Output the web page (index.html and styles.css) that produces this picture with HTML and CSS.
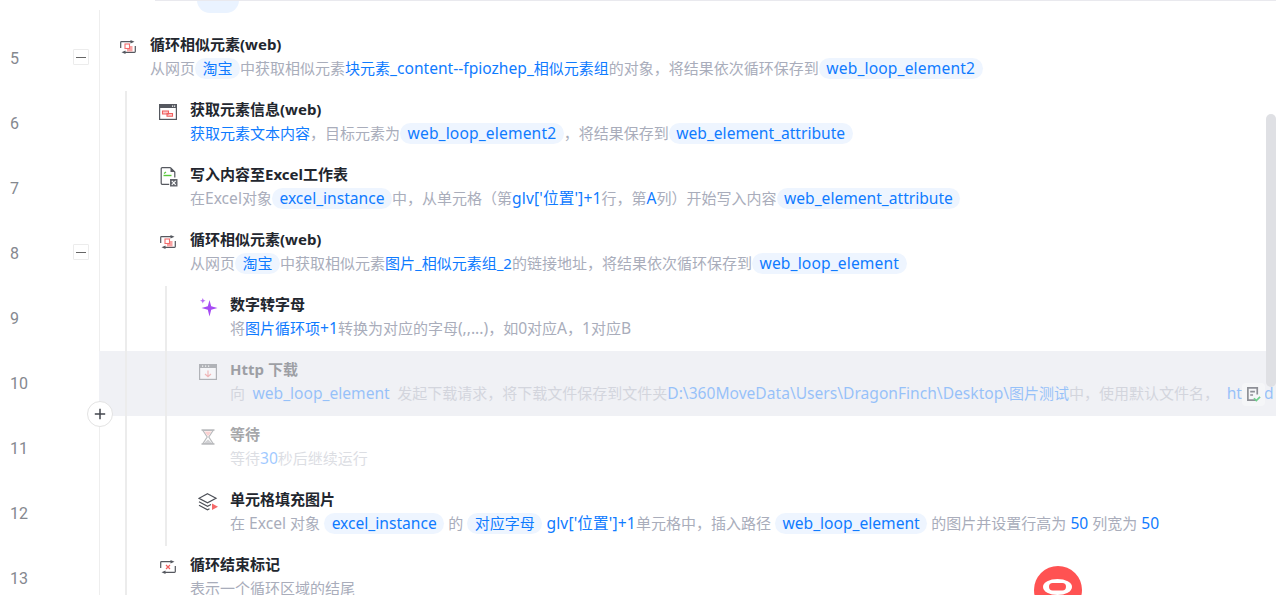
FILE: index.html
```html
<!DOCTYPE html>
<html lang="zh">
<head>
<meta charset="utf-8">
<title>流程</title>
<link rel="stylesheet" href="styles.css">
</head>
<body>
<svg class="defs" width="0" height="0">
  <symbol id="loop" viewBox="0 0 16 14">
    <path d="M.7 8V2.500c0-.5.3-.8.8-.8H12M15.300 6v5.500c0 .5-.3.8-.8.8H4" fill="none" stroke="#55585f" stroke-width="1.200"/>
    <path d="M10.500 0l4 1.700-4 1.700zM5.500 10.600l-4 1.700 4 1.700z" fill="#55585f"/>
  </symbol>
</svg>
<main class="flow">
  <div class="top-strip">
    <div class="gutter gutter-top"></div>
    <div class="top-body"><span class="top-pill"></span></div>
  </div>

  <div class="row">
    <div class="gutter"><span class="num">5</span><span class="fold"></span></div>
    <div class="body">
      <div class="content">
        <svg class="icon" viewBox="0 0 16 14"><use href="#loop"/><path d="M7 6h5.500v5.500H7z" fill="#f9a3a3"/><rect x="5" y="4" width="4.500" height="4.500" fill="#fff" stroke="#f26d6d" stroke-width="1.100"/></svg>
        <div class="text">
          <div class="title">循环相似元素(web)</div>
          <div class="desc">从网页<span class="pill">淘宝</span>中获取相似元素<b class="link">块元素<span class="en">_content--fpiozhep_</span>相似元素组</b>的对象，将结果依次循环保存到<span class="pill en wide">web_loop_element2</span></div>
        </div>
      </div>
    </div>
  </div>

  <div class="row">
    <div class="gutter"><span class="num">6</span></div>
    <div class="body">
      <span class="guide"></span>
      <div class="content">
        <svg class="icon icon-win" viewBox="0 0 18 16"><rect x=".6" y=".6" width="16.800" height="14.800" fill="#fff" stroke="#55585f" stroke-width="1.200"/><path d="M.6.6h16.800v3.400H.6z" fill="#55585f"/><path d="M13 1.500h1.200v1.200H13zM15 1.500h1.200v1.200H15z" fill="#fff"/><path d="M3.500 7h6v3h-6zM8 9.500h5.500v2.700H8z" fill="#fbc9c9" stroke="#f05f5f" stroke-width="1.100"/></svg>
        <div class="text">
          <div class="title">获取元素信息(web)</div>
          <div class="desc"><b class="link">获取元素文本内容</b>，目标元素为<span class="pill en wide">web_loop_element2</span>，将结果保存到<span class="pill en">web_element_attribute</span></div>
        </div>
      </div>
    </div>
  </div>

  <div class="row">
    <div class="gutter"><span class="num">7</span></div>
    <div class="body">
      <span class="guide"></span>
      <div class="content">
        <svg class="icon icon-doc" viewBox="0 0 18 20"><path d="M10.500.7H2.200c-.6 0-1 .4-1 1v14.600c0 .6.4 1 1 1h7M10.500.7l4.300 4.300v5.500" fill="none" stroke="#55585f" stroke-width="1.200"/><path d="M10.500.7v4.300h4.300z" fill="#55585f"/><path d="M3.500 8.500h8" stroke="#59c83a" stroke-width="1.400"/><path d="M4 6.500l2-1.500" stroke="#59c83a" stroke-width="1.200"/><path d="M10 12h7.500v7.500H10z" fill="#62656c"/><path d="M11.800 13.800l3.900 4M15.700 13.800l-3.900 4" stroke="#fff" stroke-width="1.100"/></svg>
        <div class="text">
          <div class="title">写入内容至Excel工作表</div>
          <div class="desc">在<span class="en">Excel</span>对象<span class="pill en">excel_instance</span>中，从单元格（第<b class="link en wide">glv['位置']+1</b>行，第<b class="link en">A</b>列）开始写入内容<span class="pill en">web_element_attribute</span></div>
        </div>
      </div>
    </div>
  </div>

  <div class="row">
    <div class="gutter"><span class="num">8</span><span class="fold"></span></div>
    <div class="body">
      <span class="guide"></span>
      <div class="content">
        <svg class="icon" viewBox="0 0 16 14"><use href="#loop"/><path d="M7 6h5.500v5.500H7z" fill="#f9a3a3"/><rect x="5" y="4" width="4.500" height="4.500" fill="#fff" stroke="#f26d6d" stroke-width="1.100"/></svg>
        <div class="text">
          <div class="title">循环相似元素(web)</div>
          <div class="desc">从网页<span class="pill">淘宝</span>中获取相似元素<b class="link">图片_相似元素组_2</b>的链接地址，将结果依次循环保存到<span class="pill en wide">web_loop_element</span></div>
        </div>
      </div>
    </div>
  </div>

  <div class="row">
    <div class="gutter"><span class="num">9</span></div>
    <div class="body">
      <span class="guide"></span><span class="guide"></span>
      <div class="content">
        <svg class="icon icon-spark" viewBox="0 0 18 19"><path d="M9.500 2l1.700 6.300 6.300 1.700-6.300 1.700-1.700 6.800-1.700-6.800L1.500 10l6.300-1.700z" fill="#a64bf4"/><path d="M2.800 0l.8 2 2 .8-2 .8-.8 2-.8-2-2-.8 2-.8z" fill="#b76af5"/></svg>
        <div class="text">
          <div class="title">数字转字母</div>
          <div class="desc">将<b class="link">图片循环项<span class="en">+1</span></b>转换为对应的字母<span class="en">(,,...)</span>，如<span class="en">0</span>对应<span class="en">A</span>，<span class="en">1</span>对应<span class="en">B</span></div>
        </div>
      </div>
    </div>
  </div>

  <div class="row row-active">
    <div class="gutter"><span class="num">10</span></div>
    <div class="body">
      <span class="guide"></span><span class="guide"></span>
      <div class="content is-off">
        <svg class="icon icon-win" viewBox="0 0 18 16"><rect x=".6" y=".6" width="16.800" height="14.800" fill="#fff" stroke="#55585f" stroke-width="1.200"/><path d="M.6.6h16.800v3.400H.6z" fill="#55585f"/><path d="M3 1.500h1.200v1.200H3zM6 1.500h1.200v1.200H6zM9 1.500h1.200v1.200H9z" fill="#fff"/><path d="M9 6.500v6M6 10l3 2.800 3-2.800" fill="none" stroke="#f05f5f" stroke-width="1.200"/></svg>
        <div class="text">
          <div class="title">Http 下载</div>
          <div class="desc">向<span class="pill pill-flat en">web_loop_element</span>发起下载请求，将下载文件保存到文件夹<b class="link"><span class="en">D:\360MoveData\Users\DragonFinch\Desktop\</span>图片测试</b>中，使用默认文件名，<span class="pill pill-flat en">http_d</span></div>
        </div>
      </div>
    </div>
    <button class="note-btn" type="button" aria-label="备注">
      <svg viewBox="0 0 16 18" width="15" height="17"><path d="M11 15H2V2h10v7M4.500 6h5M4.500 9.500h3" fill="none" stroke="#8d8f96" stroke-width="1.800"/><path d="M8.500 13l2.500 2.500 4-4" fill="none" stroke="#6fd08c" stroke-width="1.800"/></svg>
    </button>
    <button class="add-btn" type="button" aria-label="添加">
      <svg viewBox="0 0 12 12" width="12" height="12"><path d="M6 .8v10.400M.8 6h10.400" stroke="#43464d" stroke-width="1.500"/></svg>
    </button>
  </div>

  <div class="row">
    <div class="gutter"><span class="num">11</span></div>
    <div class="body">
      <span class="guide"></span><span class="guide"></span>
      <div class="content is-off">
        <svg class="icon icon-glass" viewBox="0 0 16 16"><path d="M1.500 1h13M1.500 15h13" stroke="#55585f" stroke-width="1.400"/><path d="M3 1.500h10L8.800 8 13 14.500H3L7.200 8z" fill="#fff" stroke="#55585f" stroke-width="1.200"/><path d="M4.500 2.500h7L8 7.300z" fill="#f58f8f"/><path d="M4 14l4-3.500 4 3.500z" fill="#8d8f96"/></svg>
        <div class="text">
          <div class="title">等待</div>
          <div class="desc">等待<b class="link en">30</b>秒后继续运行</div>
        </div>
      </div>
    </div>
  </div>

  <div class="row">
    <div class="gutter"><span class="num">12</span></div>
    <div class="body">
      <span class="guide"></span><span class="guide"></span>
      <div class="content">
        <svg class="icon icon-layers" viewBox="0 0 20 18"><path d="M9.500 .8l8.500 4.500-8.500 4.500L1 5.300zM1 8.800l8.500 4.500L13 11.500M1 12.300l8.500 4.500 2-1" fill="none" stroke="#4d5058" stroke-width="1.200"/><path d="M14 10.500l6 3.200-6 3.300z" fill="#f56a6a"/></svg>
        <div class="text">
          <div class="title">单元格填充图片</div>
          <div class="desc">在<span class="en"> Excel </span>对象<span class="en"> </span><span class="pill en">excel_instance</span><span class="en"> </span>的<span class="en"> </span><span class="pill">对应字母</span><span class="en"> </span><b class="link en wide">glv['位置']+1</b>单元格中，插入路径<span class="en"> </span><span class="pill en">web_loop_element</span><span class="en"> </span>的图片并设置行高为<span class="en"> </span><b class="link en">50</b><span class="en"> </span>列宽为<span class="en"> </span><b class="link en">50</b></div>
        </div>
      </div>
    </div>
  </div>

  <div class="row">
    <div class="gutter"><span class="num">13</span></div>
    <div class="body">
      <span class="guide"></span>
      <div class="content">
        <svg class="icon" viewBox="0 0 16 14"><use href="#loop"/><path d="M6 5l4 4M10 5L6 9" stroke="#f05f5f" stroke-width="1.200"/></svg>
        <div class="text">
          <div class="title">循环结束标记</div>
          <div class="desc">表示一个循环区域的结尾</div>
        </div>
      </div>
    </div>
  </div>
</main>
<div class="scroll-thumb"></div>
<div class="assistant">
  <svg viewBox="0 0 48 48" width="48" height="48"><circle cx="24" cy="24" r="24" fill="#ff5252"/><ellipse cx="23.500" cy="21" rx="14.500" ry="8" fill="#fff"/><rect x="15" y="17" width="17" height="7.500" rx="3.700" fill="#ff5252"/></svg>
</div>
</body>
</html>
```
FILE: styles.css
```css
* { box-sizing: border-box; }
html, body { margin: 0; height: 100%; overflow: hidden; background: #fff; }
body {
  position: relative;
  font-family: "Noto Sans", "Noto Sans CJK SC", sans-serif;
  color: #a9adbb;
}
.defs { position: absolute; }
.flow { display: flex; flex-direction: column; }

.top-strip { display: flex; height: 26px; }
.gutter-top { margin-top: 10px; height: 16px; }
.top-body {
  flex: 1;
  border-left: 1px solid transparent;
  display: flex;
  align-items: flex-start;
  position: relative;
}
.top-body::before {
  content: "";
  position: absolute;
  left: 55px; right: 0; top: 0;
  height: 1px;
  background: #e9e9ee;
}
.top-body::after {
  content: "";
  position: absolute;
  left: -1px; top: 10px; bottom: 0;
  width: 1px;
  background: #eee;
}
.top-pill {
  width: 42px;
  height: 13px;
  margin-left: 97px;
  background: #eaf3ff;
  border-radius: 0 0 14px 14px;
}

.row { display: flex; height: 65px; position: relative; }
.gutter {
  width: 99px;
  flex: none;
  display: flex;
  align-items: flex-start;
  background: #fff;
}
.num {
  padding-left: 10px;
  margin-top: 22px;
  font: 16px/22px Roboto, sans-serif;
  color: #85888f;
}
.fold {
  width: 16px;
  height: 16px;
  margin: 23px 10px 0 auto;
  border: 1.500px solid #ececec;
  border-radius: 1px;
  background: linear-gradient(#666, #666) center / 10px 1px no-repeat #fff;
}
.body {
  flex: 1;
  min-width: 0;
  display: flex;
  padding-left: 20px;
  border-left: 1px solid #eee;
  overflow: hidden;
}
.guide {
  flex: none;
  width: 40px;
  background: linear-gradient(#ececec, #ececec) 5px 0 / 2px 100% no-repeat;
}
.content { display: flex; flex: 1; min-width: 0; }
.icon { width: 16px; height: 14px; flex: none; margin: 14px 14px 0 0; }
.icon-win { width: 18px; height: 16px; margin: 13px 13px 0 -1px; }
.icon-glass { width: 16px; height: 16px; margin: 13px 14px 0 0; }
.icon-doc { width: 18px; height: 20px; margin: 11px 12px 0 0; }
.icon-spark { width: 18px; height: 19px; margin: 12px 12px 0 0; }
.icon-layers { width: 20px; height: 18px; margin: 12px 12px 0 -2px; }
.text { min-width: 0; padding-top: 7px; }
.title {
  font-size: 15px;
  line-height: 22px;
  font-weight: 700;
  color: #22262e;
  white-space: nowrap;
}
.desc {
  margin-top: 1px;
  font-size: 15px;
  line-height: 24px;
  white-space: nowrap;
}
.en { font-size: 15.6px; }
.wide { letter-spacing: .15px; }
.link { font-weight: 400; color: #0f7bff; }
.pill {
  display: inline-block;
  padding: 0 7.500px;
  line-height: 21px;
  border-radius: 11px;
  background: #eef5ff;
  color: #0f7bff;
}
.row-active .body { background: #f0f1f5; border-left-color: #f0f1f5; }
.pill-flat { background: transparent; }
.is-off { opacity: .4; }

.note-btn {
  position: absolute;
  left: 1242px;
  top: 32px;
  width: 23px;
  height: 23px;
  padding: 0;
  border: 0;
  border-radius: 4px;
  background: #f5f6f8;
  display: flex;
  align-items: center;
  justify-content: center;
}
.add-btn {
  position: absolute;
  left: 87px;
  top: 50px;
  width: 26px;
  height: 26px;
  padding: 0;
  border: 1px solid #e3e3e3;
  border-radius: 50%;
  background: #fff;
  display: flex;
  align-items: center;
  justify-content: center;
  z-index: 2;
}
.scroll-thumb {
  position: absolute;
  right: 0;
  top: 114px;
  width: 10px;
  height: 273px;
  border-radius: 5px;
  background: #dfe0e4;
}
.assistant {
  position: absolute;
  left: 1034px;
  top: 566px;
  width: 48px;
  height: 48px;
}
```
